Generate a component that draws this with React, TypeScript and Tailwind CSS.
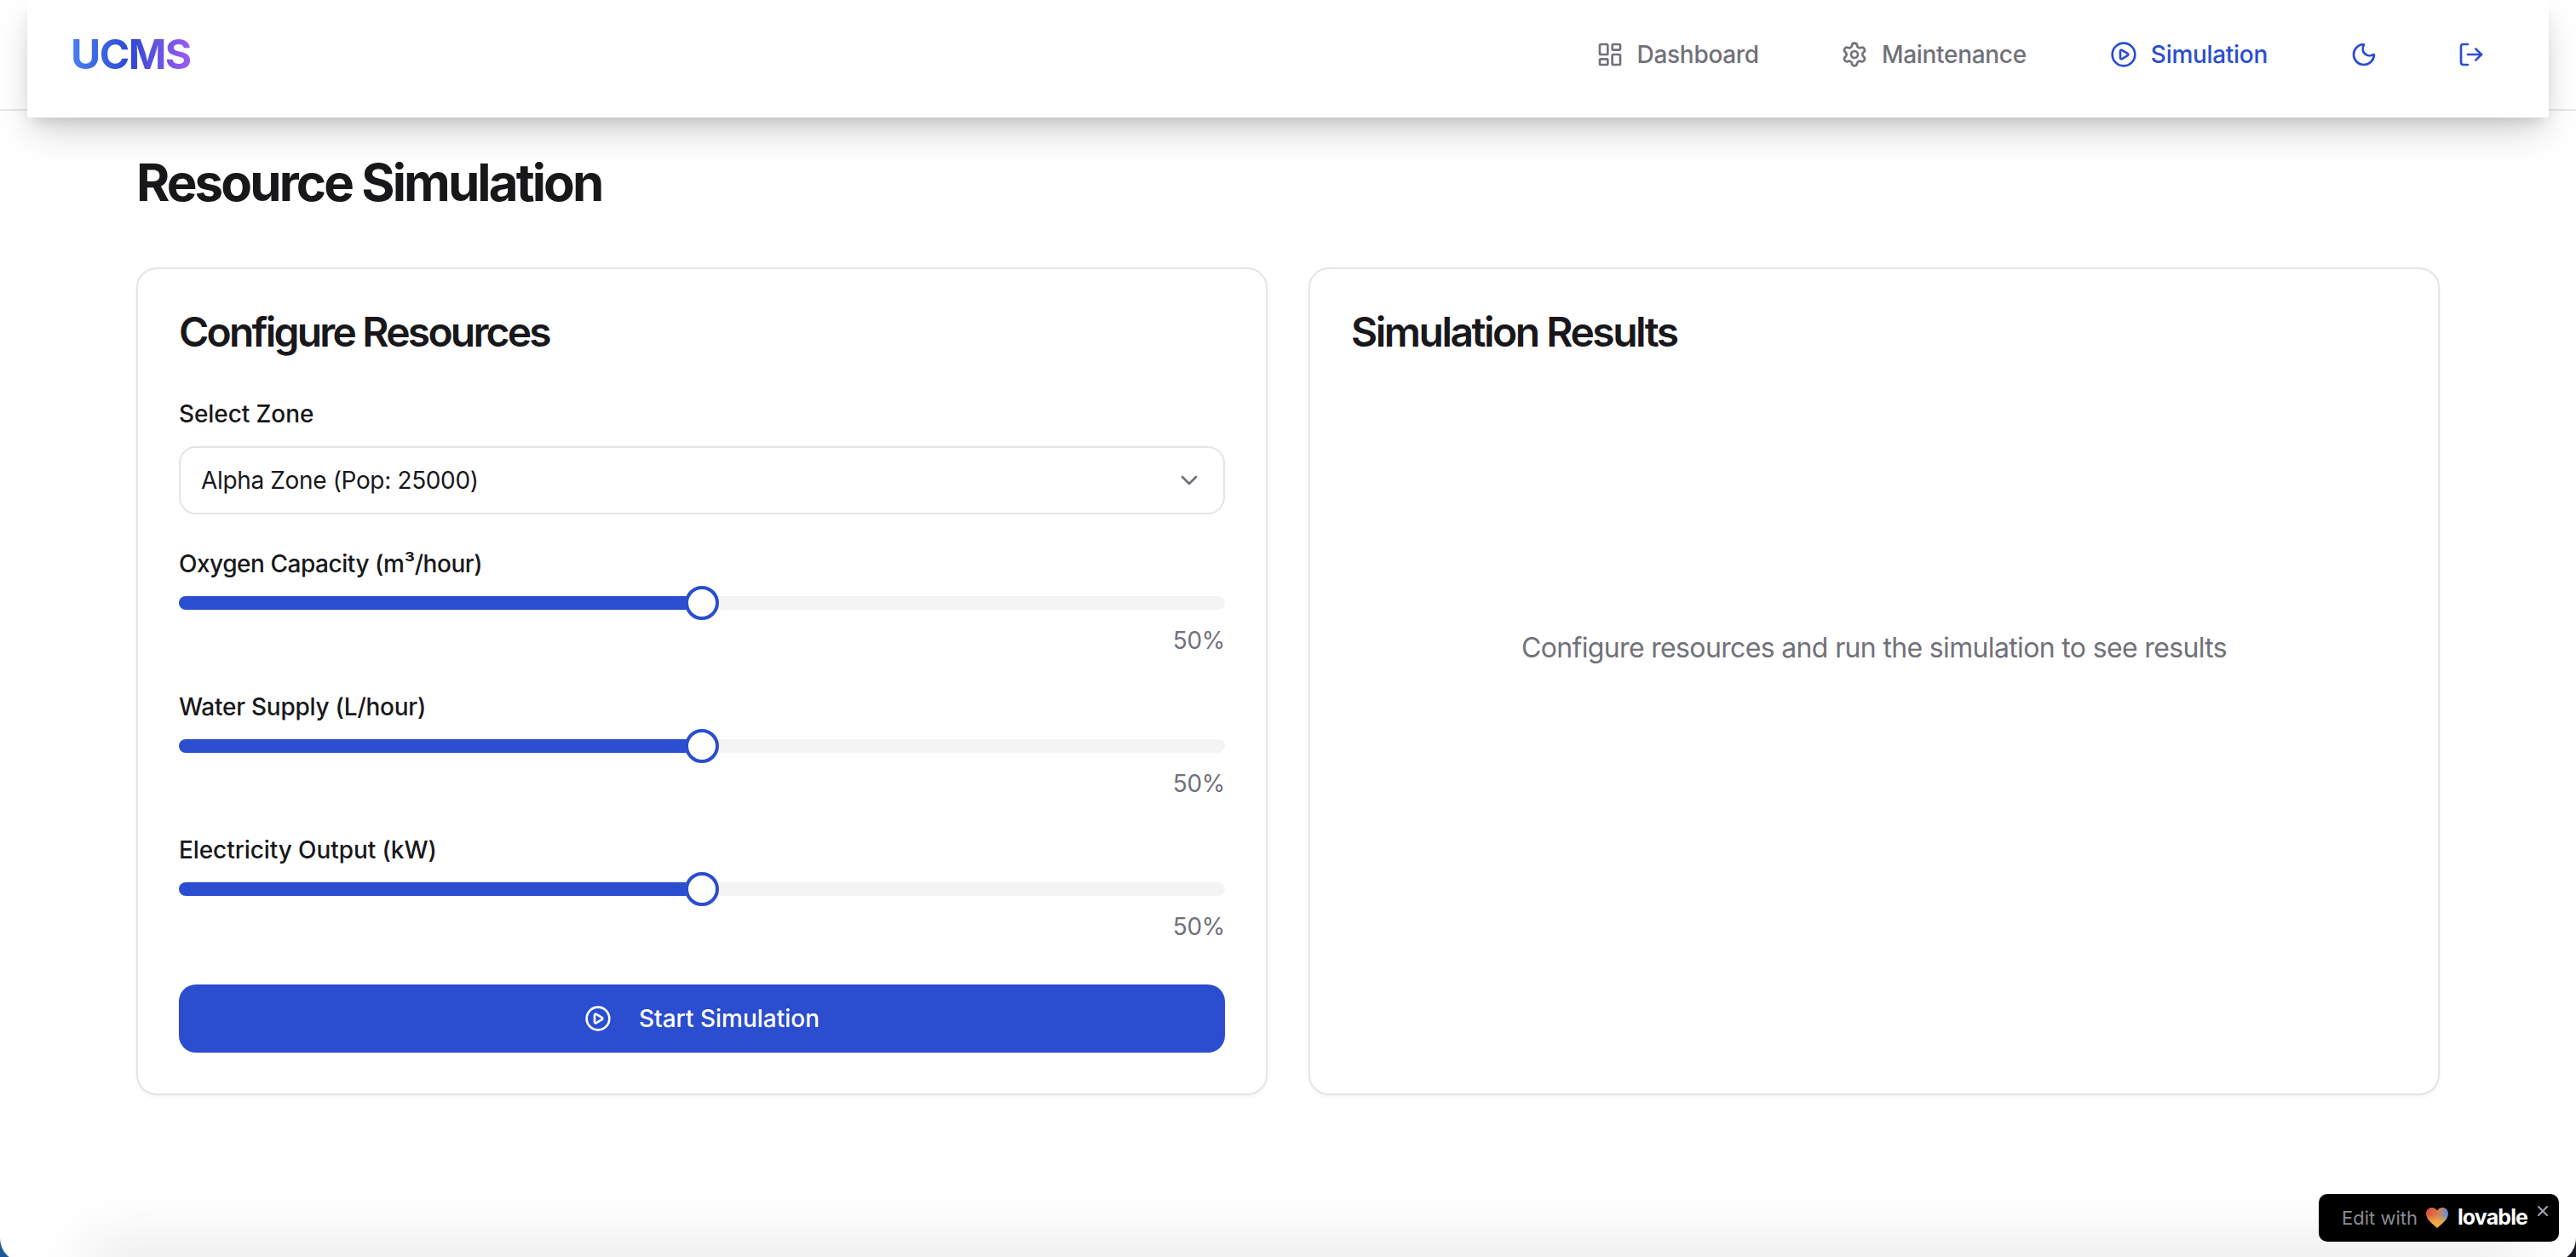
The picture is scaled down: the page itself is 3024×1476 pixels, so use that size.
import { ChevronDown, CirclePlay, LayoutDashboard, LogOut, Moon, Settings, X } from 'lucide-react'

const font = "font-['Inter','Noto_Sans',sans-serif]"

function NavItem({ icon, label, active }: { icon: React.ReactNode; label: string; active?: boolean }) {
  return (
    <div className={`flex items-center gap-4 text-[28px] leading-[40px] font-medium tracking-[-0.3px] ${active ? 'text-[#2b4dcf]' : 'text-[#71717a]'}`}>
      {icon}
      <span>{label}</span>
    </div>
  )
}

function ResourceSlider({ label, tracking }: { label: string; tracking: string }) {
  return (
    <div className="mt-[38px]">
      <div className={`text-[28px] leading-[40px] font-medium text-[#18181b] ${tracking}`}>{label}</div>
      <div className="relative mt-[6px] flex h-10 items-center">
        <div className="h-4 w-full overflow-hidden rounded-full bg-[#f4f4f5]">
          <div className="h-full w-1/2 bg-[#2b4dcf]" />
        </div>
        <div className="absolute left-1/2 h-10 w-10 -translate-x-1/2 rounded-full border-4 border-[#2b4dcf] bg-white" />
      </div>
      <div className="mt-1 text-right text-[28px] leading-[40px] tracking-[-0.3px] text-[#71717a]">50%</div>
    </div>
  )
}

function Lovable() {
  return (
    <div className="absolute right-5 bottom-6 flex h-14 w-[282px] items-center rounded-[10px] bg-black pl-[27px]">
      <span className="text-[22px] text-[#8b8b93]">Edit with</span>
      <svg className="ml-[9px]" width="28" height="26" viewBox="0 0 28 26">
        <defs>
          <linearGradient id="heart" x1="0.1" y1="0.2" x2="0.95" y2="0.35">
            <stop offset="0" stopColor="#e0533a" />
            <stop offset="0.55" stopColor="#d9814f" />
            <stop offset="1" stopColor="#5b8fdc" />
          </linearGradient>
          <linearGradient id="heartBottom" x1="0.5" y1="0.35" x2="0.5" y2="1">
            <stop offset="0" stopColor="#f0ab40" stopOpacity="0" />
            <stop offset="0.6" stopColor="#f0ab40" />
          </linearGradient>
        </defs>
        <path d="M14 25C9 20 1 15 1 8C1 3.5 4.5 1 8 1C10.5 1 12.700 2.300 14 4.500C15.300 2.300 17.500 1 20 1C23.500 1 27 3.500 27 8C27 15 19 20 14 25Z" fill="url(#heart)" />
        <path d="M14 25C9 20 1 15 1 8C1 3.5 4.5 1 8 1C10.5 1 12.700 2.300 14 4.500C15.300 2.300 17.500 1 20 1C23.500 1 27 3.500 27 8C27 15 19 20 14 25Z" fill="url(#heartBottom)" />
      </svg>
      <span className="ml-[10px] text-[25px] font-bold tracking-[-0.9px] text-white">lovable</span>
      <X className="absolute top-[10px] right-[9px] text-[#a1a1aa]" size={20} strokeWidth={2.5} />
    </div>
  )
}

export default function App() {
  return (
    <div className={`h-[1476px] w-[3024px] overflow-hidden bg-gradient-to-r from-[#1c5a97] to-[#16181d] ${font}`}>
      <div className="relative h-[1482px] overflow-hidden rounded-b-[28px] bg-white">
        {/* page header line sits behind the floating nav */}
        <div className="absolute top-0 left-0 h-[130px] w-full border-b-2 border-[#e5e5e5]" />

        <nav className="relative mx-8 flex h-[138px] items-center justify-between bg-white pr-[75px] pb-[10px] pl-[51px] shadow-[0_20px_40px_-6px_rgba(0,0,0,0.2),0_8px_16px_-6px_rgba(0,0,0,0.12)]">
          <div className="bg-gradient-to-r from-[#4a80f0] via-[#2f48d6] to-[#9b5cf0] bg-clip-text text-[48px] leading-[64px] font-bold tracking-[-1.5px] text-transparent">
            UCMS
          </div>
          <div className="flex items-center">
            <NavItem icon={<LayoutDashboard size={32} strokeWidth={2} />} label="Dashboard" />
            <div className="ml-[96px]">
              <NavItem icon={<Settings size={32} strokeWidth={2} />} label="Maintenance" />
            </div>
            <div className="ml-[98px]">
              <NavItem active icon={<CirclePlay size={32} strokeWidth={2} />} label="Simulation" />
            </div>
            <Moon className="ml-[97px] text-[#2b4dcf]" size={32} strokeWidth={2} />
            <LogOut className="ml-[94px] text-[#2b4dcf]" size={32} strokeWidth={2} />
          </div>
        </nav>

        <main className="mx-[160px]">
          <h1 className="mt-10 text-[60px] leading-[72px] font-bold tracking-[-2.9px] text-[#18181b]">Resource Simulation</h1>

          <div className="mt-16 grid grid-cols-2 gap-12">
            <section className="rounded-3xl border-2 border-[#e5e5e5] bg-white p-12 shadow-[0_2px_4px_rgba(0,0,0,0.05)]">
              <h2 className="text-[48px] leading-[52px] font-semibold tracking-[-2.8px] text-[#18181b]">Configure Resources</h2>

              <div className="mt-[50px] text-[28px] leading-[40px] font-medium tracking-[-0.1px] text-[#18181b]">Select Zone</div>
              <div className="mt-[18px] flex h-20 items-center justify-between rounded-[20px] border-2 border-[#e5e5e5] bg-white px-6 text-[28px] tracking-[-0.35px] text-[#18181b]">
                <span>Alpha Zone (Pop: 25000)</span>
                <ChevronDown className="text-[#71717a]" size={32} strokeWidth={2} />
              </div>

              <ResourceSlider label="Oxygen Capacity (m³/hour)" tracking="tracking-[-0.47px]" />
              <ResourceSlider label="Water Supply (L/hour)" tracking="tracking-[-0.25px]" />
              <ResourceSlider label="Electricity Output (kW)" tracking="tracking-[-0.09px]" />

              <button className="mt-12 flex h-20 w-full items-center justify-center gap-8 rounded-[20px] bg-[#2b4dcf] text-[28px] font-medium text-white">
                <CirclePlay size={32} strokeWidth={2} />
                Start Simulation
              </button>
            </section>

            <section className="rounded-3xl border-2 border-[#e5e5e5] bg-white p-12 shadow-[0_2px_4px_rgba(0,0,0,0.05)]">
              <h2 className="text-[48px] leading-[52px] font-semibold tracking-[-2.5px] text-[#18181b]">Simulation Results</h2>
              <div className="flex h-[690px] items-center justify-center text-[32px] tracking-[-0.65px] text-[#71717a]">
                Configure resources and run the simulation to see results
              </div>
            </section>
          </div>
        </main>

        {/* shadow of the window edge at the very bottom */}
        <div className="absolute top-[1476px] right-[60px] left-[100px] h-10 shadow-[0_-10px_70px_rgba(0,0,0,0.13)]" />

        <Lovable />
      </div>
    </div>
  )
}
